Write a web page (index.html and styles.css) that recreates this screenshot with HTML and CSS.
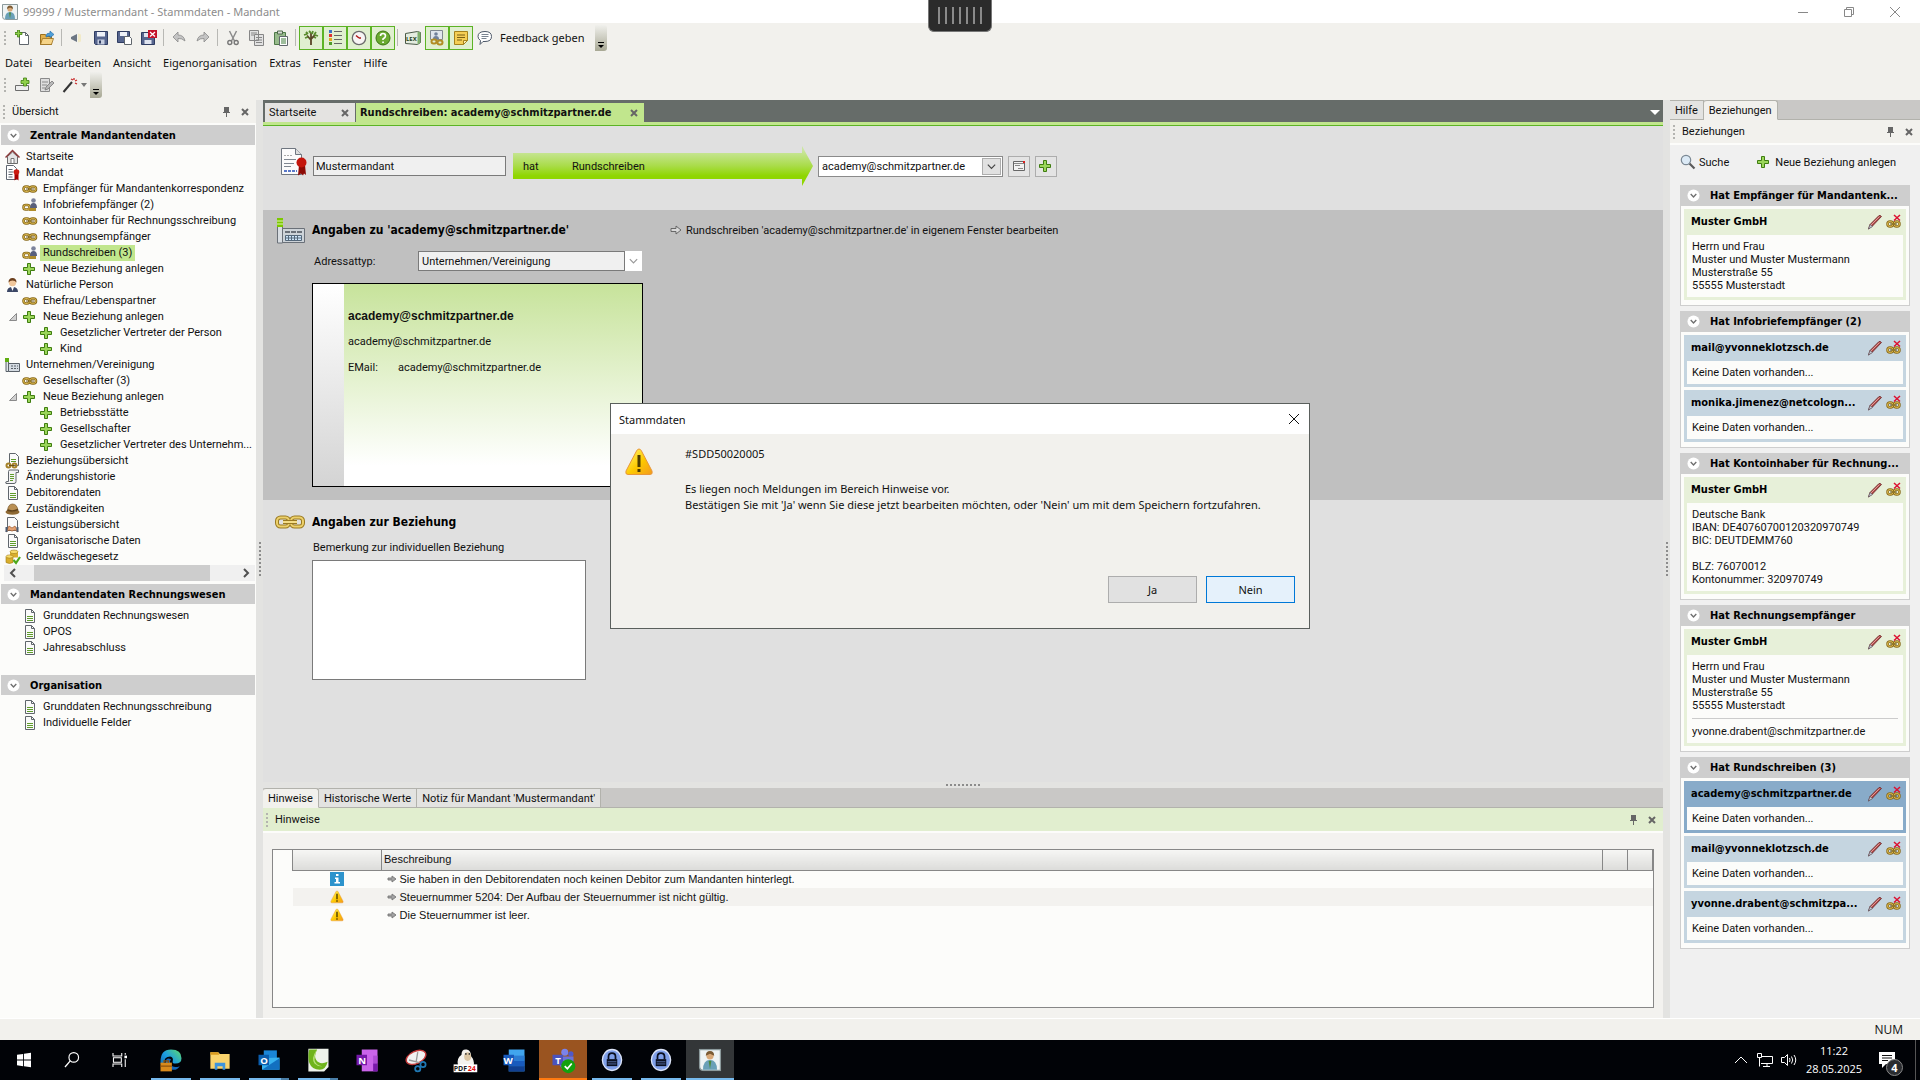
FILE: index.html
```html
<!DOCTYPE html>
<html lang="de">

<head>
  <meta charset="UTF-8">
  <meta name="viewport" content="width=device-width, initial-scale=1.0">
  <title>99999 / Mustermandant - Stammdaten - Mandant</title>
  <link rel="stylesheet" href="styles.css">
</head>

<body>

  <!-- Icon sprite -->
  <svg class="sprite" aria-hidden="true">
    <defs>
      <linearGradient id="g-arrow" x1="0" y1="0" x2="0" y2="1">
        <stop offset="0.1" stop-color="#cbe6a0"/>
        <stop offset="0.5" stop-color="#a9dc48"/>
        <stop offset="0.75" stop-color="#8fd600"/>
        <stop offset="1" stop-color="#8fd600"/>
      </linearGradient>
      <linearGradient id="g-warn" x1="0" y1="0" x2="1" y2="1">
        <stop offset="0.2" stop-color="#ffe94a"/>
        <stop offset="0.55" stop-color="#fdc800"/>
        <stop offset="1" stop-color="#f39a1e"/>
      </linearGradient>
      <linearGradient id="g-edge" x1="0" y1="1" x2="1" y2="0">
        <stop offset="0" stop-color="#0c59a4"/>
        <stop offset="0.5" stop-color="#1b9de2"/>
        <stop offset="1" stop-color="#5fdc6a"/>
      </linearGradient>
    </defs>
    <symbol id="plus" viewBox="0 0 16 16">
      <path d="M5.500 2.500h3v4h4v3h-4v4h-3v-4h-4v-3h4z" fill="#9bd65a" stroke="#3f7d10"/>
    </symbol>
    <symbol id="chain" viewBox="0 0 16 16">
      <rect x="1.500" y="5.500" width="6" height="5" rx="2.500" fill="none" stroke="#8a6b1c" stroke-width="2.600"/>
      <rect x="8" y="5.500" width="6" height="5" rx="2.500" fill="none" stroke="#8a6b1c" stroke-width="2.600"/>
      <rect x="1.500" y="5.500" width="6" height="5" rx="2.500" fill="none" stroke="#d9b64c"/>
      <rect x="8" y="5.500" width="6" height="5" rx="2.500" fill="none" stroke="#d9b64c"/>
      <path d="M4 8h8" stroke="#6d5414"/>
    </symbol>
    <symbol id="chain-big" viewBox="0 0 30 14">
      <rect x="2" y="2.500" width="12" height="9" rx="3.500" fill="none" stroke="#9a7a22" stroke-width="4"/>
      <rect x="16" y="2.500" width="12" height="9" rx="3.500" fill="none" stroke="#9a7a22" stroke-width="4"/>
      <rect x="2" y="2.500" width="12" height="9" rx="3.500" fill="none" stroke="#ecd06a" stroke-width="2"/>
      <rect x="16" y="2.500" width="12" height="9" rx="3.500" fill="none" stroke="#ecd06a" stroke-width="2"/>
      <path d="M8 7h14" stroke="#9a7a22" stroke-width="4"/>
      <path d="M8 7h14" stroke="#f3dc86" stroke-width="2"/>
    </symbol>
    <symbol id="chain-person" viewBox="0 0 16 16">
      <rect x="1.500" y="8" width="6" height="4.500" rx="2" fill="none" stroke="#8a6b1c" stroke-width="2.500"/>
      <rect x="1.500" y="8" width="6" height="4.500" rx="2" fill="none" stroke="#d9b64c"/>
      <path d="M7 12.500h7" stroke="#b08d2c" stroke-width="3"/>
      <circle cx="11.500" cy="3.500" r="2.300" fill="#7c839c"/>
      <path d="M8 11q0-5 3.500-5t3.500 5z" fill="#59607c"/>
    </symbol>
    <symbol id="chain-del" viewBox="0 0 16 16">
      <rect x="1.500" y="7.500" width="5.500" height="5" rx="2.500" fill="none" stroke="#8a6b1c" stroke-width="2.500"/>
      <rect x="8" y="7.500" width="5.500" height="5" rx="2.500" fill="none" stroke="#8a6b1c" stroke-width="2.500"/>
      <rect x="1.500" y="7.500" width="5.500" height="5" rx="2.500" fill="none" stroke="#dfbd50"/>
      <rect x="8" y="7.500" width="5.500" height="5" rx="2.500" fill="none" stroke="#dfbd50"/>
      <path d="M4 10h7" stroke="#6d5414"/>
      <path d="M8 1l6 5.500M14 1l-6 5.500" stroke="#dc1030" stroke-width="1.500"/>
    </symbol>
    <symbol id="pencil" viewBox="0 0 16 16">
      <path d="M1.500 15l1.500-4.500 9-9q1.500-.5 2.500 1l-9 9.500z" fill="#b04848" stroke="#6a2a2a" stroke-width=".8"/>
      <path d="M4 11l8.500-8.500" stroke="#e09a96"/>
      <path d="M1.500 15l1.500-4.500 2.500 2z" fill="#c9c9d4" stroke="#55555f" stroke-width=".6"/>
    </symbol>
    <symbol id="home" viewBox="0 0 16 16">
      <path d="M2.500 7.500v7h10v-7l-5-4.500z" fill="#e4e4e4" stroke="#6c6c6c"/>
      <path d="M.5 8.500l7-7 7 7" fill="none" stroke="#8c3a3a" stroke-width="1.500"/>
      <path d="M6 14V9.500h3V14" fill="#fff" stroke="#777"/>
    </symbol>
    <symbol id="cert" viewBox="0 0 16 16">
      <path d="M1.500.5h7l3 3v11h-10z" fill="#fff" stroke="#5f6670"/>
      <path d="M3.500 4.500h4M3.500 7h5M3.500 9.500h4M3.500 12h4" stroke="#5f6670"/>
      <path d="M9.500 9v6.500l2-1.500 2 1.500V9z" fill="#a00"/>
      <circle cx="11.500" cy="7" r="2.800" fill="#cc1a10"/>
    </symbol>
    <symbol id="cert-big" viewBox="0 0 30 30">
      <path d="M3.500 1.500h14l6 6v20h-20z" fill="#fbfbfb" stroke="#6f7680"/>
      <path d="M17.500 1.500v6h6" fill="#ddd" stroke="#6f7680"/>
      <path d="M6 8.500h8" stroke="#aaa" stroke-dasharray="2 1"/>
      <path d="M6 12.500h12M6 16.500h10M6 19.500h7" stroke="#7f8690"/>
      <path d="M6 24h13" stroke="#5a78c8" stroke-width="2" stroke-dasharray="3 1"/>
      <path d="M21 18l-1 10.500 3-2 2 2 1-2 2 1.500-1-10z" fill="#8d0a05"/>
      <circle cx="23.500" cy="15.500" r="5" fill="#c4150c"/>
    </symbol>
    <symbol id="person" viewBox="0 0 16 16">
      <path d="M2 15q0-5 5.500-5t5.500 5z" fill="#3b4766"/>
      <path d="M6 10l1.500 4L9 10z" fill="#fff"/>
      <circle cx="7.500" cy="5.500" r="3.700" fill="#f0c79c"/>
      <path d="M3.500 5.500Q3.500 1 7.500 1t4 4.500Q10 3.500 7.500 3.500t-4 2z" fill="#6b3f1d"/>
    </symbol>
    <symbol id="factory" viewBox="0 0 16 16">
      <path d="M1 3h2.500v11.500H1z" fill="#dfe4e8" stroke="#596068"/>
      <path d="M0 1h4v4H0z" fill="#5fae10"/>
      <path d="M3.500 6.500h11v8h-11z" fill="#d4dbe2" stroke="#596068"/>
      <path d="M6 9h7M6 11.500h7" stroke="#596068" stroke-dasharray="2 1"/>
    </symbol>
    <symbol id="factory-big" viewBox="0 0 30 28">
      <path d="M1.500 3h5v23h-5z" fill="#d8dde2" stroke="#6a7078"/>
      <path d="M1 1h6v9H1z" fill="#7cc800"/>
      <path d="M1 4h6M1 7h6" stroke="#dff0b8"/>
      <path d="M6.500 11.500h22v14h-22z" fill="#cdd3d8" stroke="#6a7078"/>
      <path d="M9 15h17" stroke="#6a7078" stroke-width="2" stroke-dasharray="5 1"/>
      <path d="M9.500 18.500h16v5h-16z" fill="#cfe6fa" stroke="#55687a"/>
      <path d="M12.500 18v6M15.500 18v6M18.500 18v6M21.500 18v6M9 21h17" stroke="#55687a"/>
    </symbol>
    <symbol id="doc" viewBox="0 0 16 16">
      <path d="M3.500 1.500h6l3 3v10h-9z" fill="#fafafa" stroke="#60666c"/>
      <path d="M9.500 1.500v3h3" fill="none" stroke="#60666c"/>
      <path d="M5 8.500h6M5 10.500h6M5 12.500h6" stroke="#5f9c2a"/>
    </symbol>
    <symbol id="doc-chain" viewBox="0 0 16 16">
      <path d="M4.500.5h6l3 3v9h-9z" fill="#fafafa" stroke="#60666c"/>
      <path d="M6 6.500h5M6 8.500h5" stroke="#5f9c2a"/>
      <rect x="1.500" y="10.500" width="4" height="4" rx="2" fill="none" stroke="#a5822a" stroke-width="2"/>
      <rect x="7.500" y="10.500" width="4" height="4" rx="2" fill="none" stroke="#a5822a" stroke-width="2"/>
      <path d="M4 12.500h5" stroke="#6d5414"/>
    </symbol>
    <symbol id="scroll" viewBox="0 0 16 16">
      <path d="M3.500 2.500Q3.500 1 5 1h8.500v2.500H11v9q0 2-2 2H1q-1-2 1-2h1.500z" fill="#f4f4f4" stroke="#60666c"/>
      <path d="M5 5.500h4M5 7.500h4M5 9.500h4M5 11.500h3" stroke="#5f9c2a"/>
    </symbol>
    <symbol id="hat" viewBox="0 0 16 16">
      <ellipse cx="7.500" cy="11" rx="7" ry="2.800" fill="#8f6a34"/>
      <path d="M2.500 10q.5-7 5-7T13 9.500q-5 2.500-10.500.5z" fill="#b98f52" stroke="#7a5828" stroke-width=".7"/>
      <path d="M2.500 9q5 2 10.500-.5" fill="none" stroke="#5f421a" stroke-width="1.500"/>
    </symbol>
    <symbol id="doc-hands" viewBox="0 0 16 16">
      <path d="M2.500.5h7l3 3v10h-10z" fill="#fafafa" stroke="#60666c"/>
      <path d="M1 15l3-6 3 2 3-2 3 6-3-2-3 1-3-1z" fill="#e5a373" stroke="#99582c" stroke-width=".7"/>
      <path d="M1.500 10v5M12.500 10v5" stroke="#4b5a70" stroke-width="2"/>
    </symbol>
    <symbol id="coins" viewBox="0 0 16 16">
      <path d="M5 2.500v6h8v-6z" fill="#d9ae2c"/>
      <ellipse cx="9" cy="2.800" rx="4" ry="1.800" fill="#f8dc6a" stroke="#a07a14" stroke-width=".6"/>
      <path d="M1 8v5.500q3.500 2 7 0V8z" fill="#d9ae2c" stroke="#a07a14" stroke-width=".6"/>
      <ellipse cx="4.500" cy="7.500" rx="3.500" ry="1.600" fill="#f8dc6a" stroke="#a07a14" stroke-width=".6"/>
      <path d="M8.500 11l2.500 3 4-6" fill="none" stroke="#4da81c" stroke-width="2.200"/>
    </symbol>
    <symbol id="chev-circle" viewBox="0 0 14 14">
      <circle cx="7" cy="7" r="6.500" fill="#fff"/>
      <path d="M4 5.500l3 3 3-3" fill="none" stroke="#6f6f6f" stroke-width="1.500"/>
    </symbol>
    <symbol id="pin" viewBox="0 0 10 12">
      <path d="M3 1h5v5H3z" fill="#666"/>
      <path d="M2 6.500h7M5.500 7v4" stroke="#666"/>
    </symbol>
    <symbol id="close" viewBox="0 0 10 10">
      <path d="M2 2l6 6M8 2L2 8" stroke="#666" stroke-width="2"/>
    </symbol>
    <symbol id="arrow-r" viewBox="0 0 12 12">
      <path d="M1 4.500h5V2l5 4-5 4V7.500H1z" fill="#d8d8d8" stroke="#5e5e5e" stroke-width=".9"/>
    </symbol>
    <symbol id="arrow-s" viewBox="0 0 12 12">
      <path d="M2 5h4V3l4 3-4 3V7H2z" fill="#a2a2a2" stroke="#777" stroke-width=".9"/>
    </symbol>
    <symbol id="warn" viewBox="0 0 30 30">
      <path d="M15 2q1.500 0 2.500 2l10.500 20q1 3.500-2 3.500H4Q1 27.500 2 24L12.500 4Q13.500 2 15 2z" fill="url(#g-warn)" stroke="#e8973a"/>
      <path d="M13.500 8h3v12h-3zM13.500 22h3v3h-3z" fill="#4d3c00"/>
    </symbol>
    <symbol id="info" viewBox="0 0 14 14">
      <path d="M0 0h14v14H0z" fill="#2d93cc"/>
      <path d="M6 2h2.500v2H6zM5 5.500h3.500V10H10v1.500H4.500V10H6V7H5z" fill="#fff"/>
    </symbol>
    <symbol id="search" viewBox="0 0 16 16">
      <path d="M9.500 9.500l5 5" stroke="#5a5a5a" stroke-width="2.200"/>
      <circle cx="6" cy="6" r="4.700" fill="#dceaf6" stroke="#7b8894" stroke-width="1.200"/>
    </symbol>
    <symbol id="user-tile" viewBox="0 0 16 16">
      <path d="M.5.500h15v15h-12q-3 0-3-3z" fill="#eef3f4" stroke="#8c9a9c"/>
      <path d="M3 15q0-7 5-7t5 7z" fill="#6aa0b8"/>
      <path d="M7 8.500l1 6 1-6z" fill="#4d8a3c"/>
      <circle cx="8" cy="5" r="2.600" fill="#d8a878"/>
      <path d="M5 5q0-3.500 3-3.500T11 5L8 3.500z" fill="#7a5a34"/>
    </symbol>
    <symbol id="new" viewBox="0 0 16 16">
      <path d="M4.500 2.500h6l3 3v9h-9z" fill="#fff" stroke="#60666c"/>
      <path d="M10.500 2.500v3h3" fill="none" stroke="#60666c"/>
      <path d="M2.500 0h2v2.500H7v2H4.500V7h-2V4.500H0v-2h2.500z" fill="#8fd04a" stroke="#3f7d10" stroke-width=".8"/>
    </symbol>
    <symbol id="open" viewBox="0 0 16 16">
      <path d="M1.500 4.500h5l1 2h5v8h-11z" fill="#e2b04c" stroke="#9a7020"/>
      <path d="M3.500 8.500h11l-2 6h-11z" fill="#f6d488" stroke="#9a7020" stroke-width=".8"/>
      <path d="M7 6q0-3 4-3V1l4 3.500-4 3.200V6q-2 0-4 1z" fill="#4f9fd8" stroke="#1f6aa8" stroke-width=".6"/>
    </symbol>
    <symbol id="horn" viewBox="0 0 16 16">
      <path d="M2 7l6-3v8L2 9z" fill="#6c7684"/>
      <path d="M9 3.500l3 1v7l-3 1z" fill="#f1eac8"/>
    </symbol>
    <symbol id="save" viewBox="0 0 16 16">
      <path d="M1.500 1.500h13v13h-12l-1-1z" fill="#56658e" stroke="#2f3c62"/>
      <path d="M4 2h8v4.500H4z" fill="#eef1f8"/>
      <path d="M4.500 9.500h7v5h-7z" fill="#c6cee0"/>
      <path d="M6 10.500h2v3H6z" fill="#2f3c62"/>
    </symbol>
    <symbol id="save-doc" viewBox="0 0 16 16">
      <path d="M.5 1.500h12v11H.5z" fill="#56658e" stroke="#2f3c62"/>
      <path d="M3 2h7v4H3z" fill="#eef1f8"/>
      <path d="M7.500 6.500h5l2 2v6h-7z" fill="#fff" stroke="#60666c"/>
    </symbol>
    <symbol id="save-x" viewBox="0 0 16 16">
      <path d="M.5 2.500h13v12H.5z" fill="#56658e" stroke="#2f3c62"/>
      <path d="M3 3h7v4H3zM3.500 10h7v4h-7z" fill="#dfe4f0"/>
      <path d="M7 0h9v8H7z" fill="#c4122a"/>
      <path d="M9 2l5 4.500M14 2L9 6.500" stroke="#fff" stroke-width="1.300"/>
    </symbol>
    <symbol id="undo" viewBox="0 0 16 16">
      <path d="M2 7l5-5v3q6 0 7 6-3-3-7-2.500V12z" fill="#c4c4c4" stroke="#8a8a8a" stroke-width=".8"/>
    </symbol>
    <symbol id="redo" viewBox="0 0 16 16">
      <path d="M14 7L9 2v3q-6 0-7 6 3-3 7-2.500V12z" fill="#c4c4c4" stroke="#8a8a8a" stroke-width=".8"/>
    </symbol>
    <symbol id="cut" viewBox="0 0 16 16">
      <path d="M4.500 1l5 10M11.500 1l-5 10" stroke="#8c8c8c" stroke-width="1.500"/>
      <circle cx="4.800" cy="12.500" r="2" fill="none" stroke="#777" stroke-width="1.400"/>
      <circle cx="11.200" cy="12.500" r="2" fill="none" stroke="#777" stroke-width="1.400"/>
    </symbol>
    <symbol id="copy" viewBox="0 0 16 16">
      <path d="M.5.500h9v10h-9zM5.500 4.500h9v11h-9z" fill="#e2e2e2" stroke="#868686"/>
      <path d="M2 3h6M2 5h3M7 7.500h6M7 10h6M7 12.500h6" stroke="#868686"/>
    </symbol>
    <symbol id="paste" viewBox="0 0 16 16">
      <path d="M1.500 2.500h11v12h-11z" fill="#98bb8c" stroke="#4e7a48"/>
      <path d="M4.500 1h5v3h-5z" fill="#d8ddd6" stroke="#4e6a4a"/>
      <path d="M6.500 6.500h8v9h-8z" fill="#fff" stroke="#60666c"/>
      <path d="M8 9h5M8 11h5M8 13h5" stroke="#3f7d3a"/>
    </symbol>
    <symbol id="tree" viewBox="0 0 16 16">
      <path d="M8 15V8M8 10L4 5.500M8 9l4-4M8 8V3" stroke="#5a4628" stroke-width="1.800" fill="none"/>
      <path d="M1 5l3-1M3 2l2 2M6 1l2 2M10 1l-1 3M13 2l-2 3M15 6l-3-1M2 8l3-1M13 8l-2-1" stroke="#5a8c2e" stroke-width="1.800"/>
    </symbol>
    <symbol id="list" viewBox="0 0 16 16">
      <path d="M2 0h3v3H2z" fill="#3f74c4"/>
      <path d="M2 4h3v3H2z" fill="#d33"/>
      <path d="M2 8h3v3H2z" fill="#e3a820"/>
      <path d="M2 12h3v3H2z" fill="#4f9c2c"/>
      <path d="M7 1.500h8M7 5.500h8M7 9.500h8M7 13.500h8" stroke="#666"/>
    </symbol>
    <symbol id="clock" viewBox="0 0 16 16">
      <circle cx="8" cy="8" r="6.700" fill="#f7f4f4" stroke="#6b6b6b" stroke-width="1.300"/>
      <path d="M8 8L5 5.500M8 8h2" stroke="#b01818" stroke-width="1.500"/>
    </symbol>
    <symbol id="help" viewBox="0 0 16 16">
      <circle cx="8" cy="8" r="7" fill="#6aab30" stroke="#3c7414"/>
      <path d="M5.500 6q0-2.500 2.500-2.500T10.500 6Q10.500 7.500 8 9v1" fill="none" stroke="#fff" stroke-width="1.600"/>
      <path d="M7.200 11.500h1.700v1.500H7.200z" fill="#fff"/>
    </symbol>
    <symbol id="rel" viewBox="0 0 16 16">
      <path d="M1.500.500h12v9h-12z" fill="#e0e6ec" stroke="#7f8890"/>
      <circle cx="7" cy="4" r="1.800" fill="#70809a"/>
      <path d="M4 9q0-3 3-3t3 3z" fill="#70809a"/>
      <rect x="2.500" y="9.500" width="5" height="4" rx="2" fill="none" stroke="#b18c24" stroke-width="2"/>
      <rect x="8.500" y="10.500" width="5" height="4" rx="2" fill="none" stroke="#b18c24" stroke-width="2"/>
    </symbol>
    <symbol id="note" viewBox="0 0 16 16">
      <path d="M1.500 1.500h13v9l-4 4h-9z" fill="#f5cf56" stroke="#a5821c"/>
      <path d="M10.500 14.500v-4h4z" fill="#fdeeb4" stroke="#a5821c"/>
      <path d="M4 5h8M4 7.500h8M4 10h5" stroke="#7a6014"/>
    </symbol>
    <symbol id="bubble" viewBox="0 0 16 16">
      <path d="M8 1.500q6.500 0 6.500 5T8 11.500H6l-3 3 .5-4q-2.500-1.500-2.500-4 0-5 7-5z" fill="#fff" stroke="#4d5868"/>
      <path d="M4.500 4.500h7M4.500 6.500h7M4.500 8.500h5" stroke="#7a8490"/>
    </symbol>
    <symbol id="card-plus" viewBox="0 0 16 16">
      <path d="M.5 8.500h13v5H.5z" fill="#eee" stroke="#6c6c6c"/>
      <path d="M8.500 1h3v2.500H14v3h-2.500V9h-3V6.500H6v-3h2.500z" fill="#8fd04a" stroke="#3f7d10" stroke-width=".8"/>
    </symbol>
    <symbol id="edit" viewBox="0 0 16 16">
      <path d="M1.500 1.500h9v13h-9z" fill="#dedede" stroke="#8a8a8a"/>
      <path d="M3 5h6M3 8h5M3 11h3" stroke="#8a8a8a"/>
      <path d="M6 13l1-3 6-6 2 2-6 6z" fill="#b8b8b8" stroke="#777" stroke-width=".8"/>
    </symbol>
    <symbol id="wand" viewBox="0 0 16 16">
      <path d="M1.500 15L10 5" stroke="#333" stroke-width="2"/>
      <path d="M9 2l2 1M12 1v2M15 3l-2 1M13 6l2 1" stroke="#c82828" stroke-width="1.300"/>
    </symbol>
    <symbol id="form" viewBox="0 0 16 16">
      <path d="M2.500 3.500h11v9h-11z" fill="#f2f2f2" stroke="#666"/>
      <path d="M3 5.500h10" stroke="#888"/>
      <path d="M4 7.500h5M7 10.500h5" stroke="#888"/>
      <path d="M12 3h2v2h-2z" fill="#d22"/>
    </symbol>
    <symbol id="chev" viewBox="0 0 12 12">
      <path d="M2 4l4 4 4-4" fill="none" stroke="currentColor" stroke-width="1.300"/>
    </symbol>
  </svg>

  <header class="window-head">
    <div class="title-bar">
      <svg class="ic"><use href="#user-tile"/></svg>
      <span class="window-title">99999 / Mustermandant - Stammdaten - Mandant</span>
      <div class="window-buttons">
        <button aria-label="Minimieren"><svg viewBox="0 0 12 12"><path d="M1 6.500h10"/></svg></button>
        <button aria-label="Verkleinern"><svg viewBox="0 0 12 12"><path d="M1.500 3.500h7v7h-7zM3.500 3V1.500h7v7H9"/></svg></button>
        <button aria-label="Schließen"><svg viewBox="0 0 12 12"><path d="M1 1l10 10M11 1L1 11"/></svg></button>
      </div>
    </div>

    <div class="toolbar">
      <span class="grip"></span>
      <button class="tool" aria-label="Neu"><svg class="ic"><use href="#new"/></svg></button>
      <button class="tool" aria-label="Öffnen"><svg class="ic"><use href="#open"/></svg></button>
      <span class="sep"></span>
      <button class="tool" aria-label="Meldung"><svg class="ic"><use href="#horn"/></svg></button>
      <button class="tool" aria-label="Speichern"><svg class="ic"><use href="#save"/></svg></button>
      <button class="tool" aria-label="Speichern und neu"><svg class="ic"><use href="#save-doc"/></svg></button>
      <button class="tool" aria-label="Speichern und schließen"><svg class="ic"><use href="#save-x"/></svg></button>
      <span class="sep"></span>
      <button class="tool" aria-label="Rückgängig"><svg class="ic"><use href="#undo"/></svg></button>
      <button class="tool" aria-label="Wiederholen"><svg class="ic"><use href="#redo"/></svg></button>
      <span class="sep"></span>
      <button class="tool" aria-label="Ausschneiden"><svg class="ic"><use href="#cut"/></svg></button>
      <button class="tool" aria-label="Kopieren"><svg class="ic"><use href="#copy"/></svg></button>
      <button class="tool" aria-label="Einfügen"><svg class="ic"><use href="#paste"/></svg></button>
      <span class="sep"></span>
      <button class="tool on" aria-label="Übersicht"><svg class="ic"><use href="#tree"/></svg></button>
      <button class="tool on" aria-label="Eigenschaften"><svg class="ic"><use href="#list"/></svg></button>
      <button class="tool on" aria-label="Historie"><svg class="ic"><use href="#clock"/></svg></button>
      <button class="tool on" aria-label="Hilfe"><svg class="ic"><use href="#help"/></svg></button>
      <span class="sep"></span>
      <button class="tool" aria-label="Lexinform"><svg class="ic" viewBox="0 0 16 16"><path d="M.5 3.500l12-2 3 1v10l-3 2-12-1z" fill="#e4ece0" stroke="#4a5a48"/><path d="M12.500 1.500l3 1v10l-3 2z" fill="#7fae6c"/><text x="1" y="11" font-size="6" font-weight="bold" fill="#24421c">LEX</text></svg></button>
      <button class="tool on" aria-label="Beziehungen"><svg class="ic"><use href="#rel"/></svg></button>
      <button class="tool on" aria-label="Notiz"><svg class="ic"><use href="#note"/></svg></button>
      <button class="tool feedback"><svg class="ic"><use href="#bubble"/></svg>Feedback geben</button>
      <button class="overflow" aria-label="Weitere Symbole"></button>
    </div>

    <nav class="menu">
      <a href="#">Datei</a>
      <a href="#">Bearbeiten</a>
      <a href="#">Ansicht</a>
      <a href="#">Eigenorganisation</a>
      <a href="#">Extras</a>
      <a href="#">Fenster</a>
      <a href="#">Hilfe</a>
    </nav>

    <div class="toolbar second">
      <span class="grip"></span>
      <button class="tool" aria-label="Anlegen"><svg class="ic"><use href="#card-plus"/></svg></button>
      <button class="tool" aria-label="Ändern"><svg class="ic"><use href="#edit"/></svg></button>
      <button class="tool wand" aria-label="Assistent"><svg class="ic"><use href="#wand"/></svg><span class="tri"></span></button>
      <button class="overflow" aria-label="Weitere Symbole"></button>
    </div>

    <div class="remote-handle"><i></i><i></i><i></i><i></i><i></i><i></i><i></i></div>
  </header>

  <main class="workspace">

    <aside class="overview">
      <div class="pane-head">
        <span class="grip"></span>
        <h2>Übersicht</h2>
        <button aria-label="Anheften"><svg class="pin"><use href="#pin"/></svg></button>
        <button aria-label="Schließen"><svg class="x"><use href="#close"/></svg></button>
      </div>
      <div class="overview-body">
        <h3 class="bar"><svg class="chev"><use href="#chev-circle"/></svg>Zentrale Mandantendaten</h3>
        <ul class="tree">
          <li><svg class="ic"><use href="#home"/></svg><a href="#">Startseite</a></li>
          <li><svg class="ic"><use href="#cert"/></svg><a href="#">Mandat</a></li>
          <li class="l1"><svg class="ic"><use href="#chain"/></svg><a href="#">Empfänger für Mandantenkorrespondenz</a></li>
          <li class="l1"><svg class="ic"><use href="#chain-person"/></svg><a href="#">Infobriefempfänger (2)</a></li>
          <li class="l1"><svg class="ic"><use href="#chain"/></svg><a href="#">Kontoinhaber für Rechnungsschreibung</a></li>
          <li class="l1"><svg class="ic"><use href="#chain"/></svg><a href="#">Rechnungsempfänger</a></li>
          <li class="l1"><svg class="ic"><use href="#chain-person"/></svg><a href="#" class="selected">Rundschreiben (3)</a></li>
          <li class="l1"><svg class="ic"><use href="#plus"/></svg><a href="#">Neue Beziehung anlegen</a></li>
          <li><svg class="ic"><use href="#person"/></svg><a href="#">Natürliche Person</a></li>
          <li class="l1"><svg class="ic"><use href="#chain"/></svg><a href="#">Ehefrau/Lebenspartner</a></li>
          <li class="l1 open"><svg class="twist" viewBox="0 0 8 8"><path d="M7.500.500v7h-7z"/></svg><svg class="ic"><use href="#plus"/></svg><a href="#">Neue Beziehung anlegen</a></li>
          <li class="l2"><svg class="ic"><use href="#plus"/></svg><a href="#">Gesetzlicher Vertreter der Person</a></li>
          <li class="l2"><svg class="ic"><use href="#plus"/></svg><a href="#">Kind</a></li>
          <li><svg class="ic"><use href="#factory"/></svg><a href="#">Unternehmen/Vereinigung</a></li>
          <li class="l1"><svg class="ic"><use href="#chain"/></svg><a href="#">Gesellschafter (3)</a></li>
          <li class="l1 open"><svg class="twist" viewBox="0 0 8 8"><path d="M7.500.500v7h-7z"/></svg><svg class="ic"><use href="#plus"/></svg><a href="#">Neue Beziehung anlegen</a></li>
          <li class="l2"><svg class="ic"><use href="#plus"/></svg><a href="#">Betriebsstätte</a></li>
          <li class="l2"><svg class="ic"><use href="#plus"/></svg><a href="#">Gesellschafter</a></li>
          <li class="l2"><svg class="ic"><use href="#plus"/></svg><a href="#">Gesetzlicher Vertreter des Unternehm...</a></li>
          <li><svg class="ic"><use href="#doc-chain"/></svg><a href="#">Beziehungsübersicht</a></li>
          <li><svg class="ic"><use href="#scroll"/></svg><a href="#">Änderungshistorie</a></li>
          <li><svg class="ic"><use href="#doc"/></svg><a href="#">Debitorendaten</a></li>
          <li><svg class="ic"><use href="#hat"/></svg><a href="#">Zuständigkeiten</a></li>
          <li><svg class="ic"><use href="#doc-hands"/></svg><a href="#">Leistungsübersicht</a></li>
          <li><svg class="ic"><use href="#doc"/></svg><a href="#">Organisatorische Daten</a></li>
          <li><svg class="ic"><use href="#coins"/></svg><a href="#">Geldwäschegesetz</a></li>
        </ul>
        <div class="hscroll">
          <svg viewBox="0 0 12 12"><path d="M8 2L4 6l4 4"/></svg>
          <span class="thumb"></span>
          <svg viewBox="0 0 12 12"><path d="M4 2l4 4-4 4"/></svg>
        </div>
        <h3 class="bar"><svg class="chev"><use href="#chev-circle"/></svg>Mandantendaten Rechnungswesen</h3>
        <ul class="tree short">
          <li class="l1"><svg class="ic"><use href="#doc"/></svg><a href="#">Grunddaten Rechnungswesen</a></li>
          <li class="l1"><svg class="ic"><use href="#doc"/></svg><a href="#">OPOS</a></li>
          <li class="l1"><svg class="ic"><use href="#doc"/></svg><a href="#">Jahresabschluss</a></li>
        </ul>
        <h3 class="bar"><svg class="chev"><use href="#chev-circle"/></svg>Organisation</h3>
        <ul class="tree">
          <li class="l1"><svg class="ic"><use href="#doc"/></svg><a href="#">Grunddaten Rechnungsschreibung</a></li>
          <li class="l1"><svg class="ic"><use href="#doc"/></svg><a href="#">Individuelle Felder</a></li>
        </ul>
      </div>
    </aside>

    <div class="splitter"><span class="dots"></span></div>

    <div class="center">
      <section class="document">
        <div class="doc-tabs">
          <div class="doc-tab"><a href="#">Startseite</a><button aria-label="Tab schließen"><svg class="x"><use href="#close"/></svg></button></div>
          <div class="doc-tab active"><a href="#">Rundschreiben: academy@schmitzpartner.de</a><button aria-label="Tab schließen"><svg class="x"><use href="#close"/></svg></button></div>
          <span class="tab-menu"></span>
        </div>

        <div class="relation">
          <svg class="big-icon"><use href="#cert-big"/></svg>
          <input class="field name" type="text" value="Mustermandant" aria-label="Name" readonly>
          <div class="rel-arrow">
            <svg viewBox="0 0 300 40" preserveAspectRatio="none"><path d="M0 7h289V0l11 20-11 20v-7H0z" fill="url(#g-arrow)"/></svg>
            <span class="verb">hat</span><span>Rundschreiben</span>
          </div>
          <div class="combo">
            <select aria-label="Empfänger"><option>academy@schmitzpartner.de</option></select>
            <svg class="combo-btn"><use href="#chev"/></svg>
          </div>
          <button class="square" aria-label="Details"><svg class="ic"><use href="#form"/></svg></button>
          <button class="square" aria-label="Hinzufügen"><svg class="ic"><use href="#plus"/></svg></button>
        </div>

        <div class="address">
          <svg class="big-icon"><use href="#factory-big"/></svg>
          <div class="address-body">
            <div class="address-head">
              <h2>Angaben zu 'academy@schmitzpartner.de'</h2>
              <a href="#"><svg class="arrow"><use href="#arrow-r"/></svg>Rundschreiben 'academy@schmitzpartner.de' in eigenem Fenster bearbeiten</a>
            </div>
            <div class="type-row">
              <label for="typ">Adressattyp:</label>
              <div class="type-select">
                <select id="typ"><option>Unternehmen/Vereinigung</option></select>
                <svg class="type-btn"><use href="#chev"/></svg>
              </div>
            </div>
            <div class="address-card">
              <strong>academy@schmitzpartner.de</strong>
              <p>academy@schmitzpartner.de</p>
              <p><span class="key">EMail:</span>academy@schmitzpartner.de</p>
            </div>
          </div>
        </div>

        <div class="remark">
          <svg class="chain-icon"><use href="#chain-big"/></svg>
          <div class="remark-body">
            <h2>Angaben zur Beziehung</h2>
            <label for="bem">Bemerkung zur individuellen Beziehung</label>
            <textarea id="bem"></textarea>
          </div>
        </div>
      </section>

      <div class="hsplitter"><span class="hdots"></span></div>

      <section class="hints">
        <div class="tabs">
          <button class="tab active">Hinweise</button>
          <button class="tab">Historische Werte</button>
          <button class="tab">Notiz für Mandant 'Mustermandant'</button>
        </div>
        <div class="pane-head green">
          <span class="grip"></span>
          <h2>Hinweise</h2>
          <button aria-label="Anheften"><svg class="pin"><use href="#pin"/></svg></button>
          <button aria-label="Schließen"><svg class="x"><use href="#close"/></svg></button>
        </div>
        <div class="hint-box">
          <table>
            <thead>
              <tr><th class="c-icon"></th><th>Beschreibung</th><th class="c-a"></th><th class="c-b"></th></tr>
            </thead>
            <tbody>
              <tr><td><svg class="info"><use href="#info"/></svg></td><td colspan="3"><svg class="arrow"><use href="#arrow-s"/></svg>Sie haben in den Debitorendaten noch keinen Debitor zum Mandanten hinterlegt.</td></tr>
              <tr><td><svg class="info"><use href="#warn"/></svg></td><td colspan="3"><svg class="arrow"><use href="#arrow-s"/></svg>Steuernummer 5204: Der Aufbau der Steuernummer ist nicht gültig.</td></tr>
              <tr><td><svg class="info"><use href="#warn"/></svg></td><td colspan="3"><svg class="arrow"><use href="#arrow-s"/></svg>Die Steuernummer ist leer.</td></tr>
            </tbody>
          </table>
        </div>
      </section>
    </div>

    <div class="splitter"><span class="dots"></span></div>

    <aside class="relations">
      <div class="tabs">
        <button class="tab">Hilfe</button>
        <button class="tab active">Beziehungen</button>
      </div>
      <div class="pane-head">
        <span class="grip"></span>
        <h2>Beziehungen</h2>
        <button aria-label="Anheften"><svg class="pin"><use href="#pin"/></svg></button>
        <button aria-label="Schließen"><svg class="x"><use href="#close"/></svg></button>
      </div>
      <div class="relations-body">
        <div class="actions">
          <a href="#"><svg class="ic"><use href="#search"/></svg>Suche</a>
          <a href="#"><svg class="ic"><use href="#plus"/></svg>Neue Beziehung anlegen</a>
        </div>

        <section class="group">
          <h3 class="bar"><svg class="chev"><use href="#chev-circle"/></svg>Hat Empfänger für Mandantenk...</h3>
          <article class="card green">
            <h4><span>Muster GmbH</span><svg class="ic"><use href="#pencil"/></svg><svg class="ic"><use href="#chain-del"/></svg></h4>
            <p>Herrn und Frau<br>Muster und Muster Mustermann<br>Musterstraße 55<br>55555 Musterstadt</p>
          </article>
        </section>

        <section class="group">
          <h3 class="bar"><svg class="chev"><use href="#chev-circle"/></svg>Hat Infobriefempfänger (2)</h3>
          <article class="card">
            <h4><span>mail@yvonneklotzsch.de</span><svg class="ic"><use href="#pencil"/></svg><svg class="ic"><use href="#chain-del"/></svg></h4>
            <p>Keine Daten vorhanden...</p>
          </article>
          <article class="card">
            <h4><span>monika.jimenez@netcologn...</span><svg class="ic"><use href="#pencil"/></svg><svg class="ic"><use href="#chain-del"/></svg></h4>
            <p>Keine Daten vorhanden...</p>
          </article>
        </section>

        <section class="group">
          <h3 class="bar"><svg class="chev"><use href="#chev-circle"/></svg>Hat Kontoinhaber für Rechnung...</h3>
          <article class="card green">
            <h4><span>Muster GmbH</span><svg class="ic"><use href="#pencil"/></svg><svg class="ic"><use href="#chain-del"/></svg></h4>
            <p>Deutsche Bank<br>IBAN: DE40760700120320970749<br>BIC: DEUTDEMM760<br><br>BLZ: 76070012<br>Kontonummer: 320970749</p>
          </article>
        </section>

        <section class="group">
          <h3 class="bar"><svg class="chev"><use href="#chev-circle"/></svg>Hat Rechnungsempfänger</h3>
          <article class="card green">
            <h4><span>Muster GmbH</span><svg class="ic"><use href="#pencil"/></svg><svg class="ic"><use href="#chain-del"/></svg></h4>
            <p>Herrn und Frau<br>Muster und Muster Mustermann<br>Musterstraße 55<br>55555 Musterstadt<span class="mail">yvonne.drabent@schmitzpartner.de</span></p>
          </article>
        </section>

        <section class="group">
          <h3 class="bar"><svg class="chev"><use href="#chev-circle"/></svg>Hat Rundschreiben (3)</h3>
          <article class="card current">
            <h4><span>academy@schmitzpartner.de</span><svg class="ic"><use href="#pencil"/></svg><svg class="ic"><use href="#chain-del"/></svg></h4>
            <p>Keine Daten vorhanden...</p>
          </article>
          <article class="card">
            <h4><span>mail@yvonneklotzsch.de</span><svg class="ic"><use href="#pencil"/></svg><svg class="ic"><use href="#chain-del"/></svg></h4>
            <p>Keine Daten vorhanden...</p>
          </article>
          <article class="card">
            <h4><span>yvonne.drabent@schmitzpa...</span><svg class="ic"><use href="#pencil"/></svg><svg class="ic"><use href="#chain-del"/></svg></h4>
            <p>Keine Daten vorhanden...</p>
          </article>
        </section>
      </div>
    </aside>
  </main>

  <div class="status-bar">NUM</div>

  <footer class="taskbar">
    <button class="task" aria-label="Start"><svg viewBox="0 0 32 32"><path d="M8 10l7-1v6.500H8zM16 8.800l8-1.200v7.900h-8zM8 16.500h7V23l-7-1zM16 16.500h8v7.900l-8-1.200z" fill="#fff"/></svg></button>
    <button class="task" aria-label="Suchen"><svg viewBox="0 0 32 32"><circle cx="18" cy="13" r="5.500" fill="none" stroke="#fff" stroke-width="1.300"/><path d="M14 17l-6 7" stroke="#fff" stroke-width="1.500"/></svg></button>
    <button class="task" aria-label="Aktive Anwendungen"><svg viewBox="0 0 32 32"><path d="M8 8v3.500h10V8M8 24v-3.500h10V24M8.500 13.500h9v5h-9zM22 8v2M22 15v9" fill="none" stroke="#fff" stroke-width="1.200"/><path d="M21 11h3v3h-3z" fill="#fff"/></svg></button>
    <button class="task app running" aria-label="Edge"><svg viewBox="0 0 32 32"><path d="M4 18Q4 4 16 4q12 0 12 10 0 6-7 6-4 0-3-3 1-4-3-5Q8 12 8 20q1 7 9 8Q4 28 4 18z" fill="url(#g-edge)"/><path d="M10 17q-1 8 7 10 6 1 9-4-8 3-11-3-1-3 1-5-5-2-6 2z" fill="#1668b8"/><path d="M4 19h13v10H4z" fill="#d98a1c"/><path d="M8 19v-2h5v2M4 23h13" fill="none" stroke="#8d520c" stroke-width="1.500"/></svg></button>
    <button class="task app running" aria-label="Explorer"><svg viewBox="0 0 32 32"><path d="M5 7h9l2 2h11v17H5z" fill="#f9d36c"/><path d="M5 7h9l1 3H5z" fill="#d89a1e"/><path d="M10 27v-8h12v8h-3v-4h-6v4z" fill="#3d94dc"/></svg></button>
    <button class="task app running group-task" aria-label="Outlook"><svg viewBox="0 0 32 32"><path d="M10 5h15v14H10z" fill="#1a86d8"/><path d="M8 14l20-1v14H8z" fill="#37b2f0"/><path d="M8 27l20-13v13z" fill="#1270c0"/><path d="M4 10h12v12H4z" fill="#0a5dad"/><text x="6" y="20" font-size="11" font-weight="bold" fill="#fff">O</text></svg></button>
    <button class="task app running group-task" aria-label="DATEV"><svg viewBox="0 0 32 32"><path d="M5 3h23v21l-5 5H5z" fill="#eef2ea"/><path d="M6 4h9q-4 8-1 12 4 6 13 2-2 9-9 9-9 0-12-8-2-7 0-15z" fill="#6fb41c"/><path d="M14 5q-6 9-2 15 4 4 9 3-8-1-9-7 0-5 2-11z" fill="#b9e27c"/></svg></button>
    <button class="task app" aria-label="OneNote"><svg viewBox="0 0 32 32"><path d="M10 4h18v25H10z" fill="#ca64ea"/><path d="M23 11h5v9h-5z" fill="#ae4bd5"/><path d="M23 20h5v9h-5z" fill="#7719aa"/><path d="M4 10h12v12H4z" fill="#7719aa"/><text x="6" y="20" font-size="11" font-weight="bold" fill="#fff">N</text></svg></button>
    <button class="task app" aria-label="Snipping Tool"><svg viewBox="0 0 32 32"><ellipse cx="16" cy="13" rx="12" ry="7" transform="rotate(-25 16 13)" fill="#f1f1f1" stroke="#c43a3a" stroke-width="1.500"/><path d="M8 16l12 3M18 7l-2 12" stroke="#999" stroke-width="1.500"/><circle cx="18" cy="26" r="3" fill="none" stroke="#1f78b4" stroke-width="2"/><circle cx="24" cy="21" r="3" fill="none" stroke="#1f78b4" stroke-width="2"/></svg></button>
    <button class="task app" aria-label="PDF24"><svg viewBox="0 0 32 32"><path d="M8 22q-2-8 4-12 0-7 6-6 5 1 5 8 4 4 3 10z" fill="#f4f2ee"/><ellipse cx="19" cy="12" rx="4" ry="5" fill="#dcc6a4"/><circle cx="17" cy="9" r="1" fill="#333"/><circle cx="21" cy="9" r="1" fill="#333"/><path d="M3 21h27v9H3z" fill="#fff"/><text x="3" y="29" font-size="8" font-weight="bold" fill="#222">PDF</text><text x="19" y="29" font-size="8" font-weight="bold" fill="#e01010">24</text></svg></button>
    <button class="task app" aria-label="Word"><svg viewBox="0 0 32 32"><path d="M10 4h18v25H10z" fill="#41a5ee"/><path d="M10 11h18v6H10z" fill="#2b7cd3"/><path d="M10 17h18v6H10z" fill="#185abd"/><path d="M10 23h18v6H10z" fill="#103f91"/><path d="M4 10h12v12H4z" fill="#185abd"/><text x="4" y="20" font-size="11" font-weight="bold" fill="#fff">W</text></svg></button>
    <button class="task app alert" aria-label="Teams"><svg viewBox="0 0 32 32"><circle cx="18" cy="7" r="4" fill="#7b83eb"/><circle cx="25" cy="9" r="3" fill="#5059c9"/><path d="M12 12h16v9q-2 6-8 6t-8-6z" fill="#6a72dc"/><path d="M4 10h12v12H4z" fill="#4b53bc"/><text x="7" y="20" font-size="11" font-weight="bold" fill="#fff">T</text><circle cx="22" cy="23" r="8" fill="#13a10e"/><path d="M18 23l3 3 5-6" fill="none" stroke="#fff" stroke-width="2"/></svg></button>
    <button class="task app running" aria-label="Sicherheitspaket"><svg viewBox="0 0 32 32"><ellipse cx="16" cy="16" rx="11" ry="12" fill="#7f9fe8" stroke="#dce4f8" stroke-width="1.500"/><path d="M10 15h12v8H10z" fill="#0a0f20"/><path d="M12 15v-3q0-4 4-4t4 4v3" fill="none" stroke="#0a0f20" stroke-width="2"/><path d="M11 18h10M11 20.500h10" stroke="#7f9fe8" stroke-width=".7"/></svg></button>
    <button class="task app running" aria-label="Sicherheitspaket"><svg viewBox="0 0 32 32"><ellipse cx="16" cy="16" rx="11" ry="12" fill="#7f9fe8" stroke="#dce4f8" stroke-width="1.500"/><path d="M10 15h12v8H10z" fill="#0a0f20"/><path d="M12 15v-3q0-4 4-4t4 4v3" fill="none" stroke="#0a0f20" stroke-width="2"/><path d="M11 18h10M11 20.500h10" stroke="#7f9fe8" stroke-width=".7"/></svg></button>
    <button class="task app focused" aria-label="Stammdaten"><svg viewBox="-2 -2 20 20"><use href="#user-tile" width="16" height="16"/></svg></button>

    <div class="tray">
      <svg class="tray-icon" viewBox="0 0 16 16"><path d="M2 11l6-6 6 6"/></svg>
      <svg class="tray-icon" viewBox="0 0 16 16"><path d="M4 4.500h11.500v7H4M10 12v2.500M6 14.500h7M.500 1.500h4v4h-4zM2.500 6v8.500"/></svg>
      <svg class="tray-icon" viewBox="0 0 16 16"><path d="M.5 5.500h3l3-3v11l-3-3h-3zM8.500 6q1 2 0 4M10.500 4.500q2.500 3.500 0 7M13 3q3.500 5 0 10"/></svg>
      <div class="clock">11:22<br>28.05.2025</div>
      <button class="notify" aria-label="Benachrichtigungen">
        <svg viewBox="0 0 18 18"><path d="M1 1h16v12h-9l-4 4v-4H1z" fill="#fff"/><path d="M4 4.500h10M4 7h10M4 9.500h6" stroke="#111"/></svg>
        <span class="badge">4</span>
      </button>
    </div>
  </footer>

  <!-- Message box over the form -->
  <div class="overlay">
    <div class="dialog" role="dialog" aria-labelledby="dlg-title">
      <div class="dialog-title">
        <h2 id="dlg-title">Stammdaten</h2>
        <button aria-label="Schließen"><svg viewBox="0 0 12 12"><path d="M1 1l10 10M11 1L1 11"/></svg></button>
      </div>
      <div class="dialog-body">
        <svg class="dialog-icon"><use href="#warn"/></svg>
        <div class="dialog-text">
          <p class="code">#SDD50020005</p>
          <p>Es liegen noch Meldungen im Bereich Hinweise vor.<br>Bestätigen Sie mit 'Ja' wenn Sie diese jetzt bearbeiten möchten, oder 'Nein' um mit dem Speichern fortzufahren.</p>
        </div>
      </div>
      <div class="dialog-buttons">
        <button>Ja</button>
        <button class="default">Nein</button>
      </div>
    </div>
  </div>

</body>

</html>
```

FILE: styles.css
```css
* {
  box-sizing: border-box;
}

body {
  margin: 0;
  min-height: 100vh;
  display: flex;
  flex-direction: column;
  background-color: #f2f1ed;
  font-family: Roboto, "Liberation Sans", Arial, sans-serif;
  font-size: 11px;
  line-height: 13px;
  color: #111;
}

h2, h3, h4, p, ul {
  margin: 0;
  padding: 0;
}

a {
  color: inherit;
  text-decoration: none;
}

button {
  margin: 0;
  padding: 0;
  border: 0;
  background: none;
  font: inherit;
  color: inherit;
}

svg {
  display: block;
  flex: none;
}

.sprite {
  position: absolute;
  width: 0;
  height: 0;
}

.ic {
  width: 16px;
  height: 16px;
}

.x {
  width: 10px;
  height: 10px;
}

.pin {
  width: 10px;
  height: 12px;
}

.arrow {
  width: 12px;
  height: 12px;
}

.grip {
  width: 2px;
  height: 14px;
  background: repeating-linear-gradient(#b4b4b0 0 2px, transparent 2px 4px);
}

/* Title bar, tool bars, menu */
.window-head {
  position: relative;
  font-family: "Noto Sans", sans-serif;
}

.title-bar {
  height: 24px;
  padding: 0 2px;
  display: flex;
  align-items: center;
  gap: 5px;
  background-color: #fff;
  border-bottom: 1px solid #f2f1ed;
  color: #8c8c8c;
}

.window-buttons {
  margin-left: auto;
  display: flex;
}

.window-buttons button {
  width: 46px;
  height: 22px;
  display: flex;
  align-items: center;
  justify-content: center;
}

.window-buttons svg {
  width: 12px;
  height: 12px;
  fill: none;
  stroke: #888;
}

.toolbar {
  height: 27px;
  padding-left: 4px;
  display: flex;
  align-items: center;
}

.toolbar.second {
  padding-bottom: 3px;
}

.toolbar .grip {
  margin-right: 5px;
}

.tool {
  width: 24px;
  height: 24px;
  display: flex;
  align-items: center;
  justify-content: center;
}

.tool.on {
  background-color: #e0efd0;
  border: 1px solid #5cb325;
}

.sep {
  width: 1px;
  height: 17px;
  margin: 0 3px 0 2px;
  background-color: #b8b8b4;
}

.tool.feedback {
  width: auto;
  padding: 0 10px 0 4px;
  gap: 7px;
}

.tool.wand {
  width: 31px;
  gap: 3px;
}

.tri {
  border: 3px solid transparent;
  border-top: 4px solid #777;
  border-bottom: 0;
}

.overflow {
  width: 12px;
  height: 26px;
  border-radius: 0 3px 3px 0;
  background: linear-gradient(#f0f0ec, #a8a894);
  display: flex;
  flex-direction: column;
  justify-content: flex-end;
  align-items: center;
  padding-bottom: 3px;
}

.overflow::before {
  content: "";
  width: 6px;
  height: 1px;
  margin-bottom: 2px;
  background-color: #000;
}

.overflow::after {
  content: "";
  border: 3px solid transparent;
  border-top: 3px solid #000;
  border-bottom: 0;
}

.menu {
  height: 22px;
  padding-left: 5px;
  display: flex;
  align-items: center;
  gap: 12px;
}

.remote-handle {
  position: absolute;
  top: 0;
  left: 50%;
  width: 64px;
  height: 32px;
  margin-left: -32px;
  display: flex;
  justify-content: center;
  align-items: center;
  gap: 5px;
  background-color: #2b2b2b;
  border: 1px solid #777;
  border-top: 0;
  border-radius: 0 0 6px 6px;
}

.remote-handle i {
  width: 2px;
  height: 17px;
  background-color: #8a8a8a;
}

/* Work area */
.workspace {
  flex: 1;
  display: grid;
  grid-template-columns: 256px 7px minmax(0, 1fr) 7px 250px;
  background-color: #e3e3e1;
  border-bottom: 1px solid #fff;
}

.splitter {
  display: flex;
  align-items: center;
  justify-content: center;
}

.dots {
  width: 2px;
  height: 34px;
  background: repeating-linear-gradient(#8c8c8c 0 2px, transparent 2px 4px);
}

.pane-head {
  height: 23px;
  padding: 0 6px 0 3px;
  display: flex;
  align-items: center;
  background-color: #f2f1ed;
}

.pane-head h2 {
  flex: 1;
  margin-left: 7px;
  font-size: 11px;
  font-weight: normal;
}

.pane-head button {
  margin-left: 9px;
}

.bar {
  height: 20px;
  padding-left: 6px;
  display: flex;
  align-items: center;
  gap: 10px;
  background-color: #cecece;
  font-family: "DejaVu Sans Condensed", "Noto Sans", sans-serif;
  font-size: 11px;
  font-weight: bold;
  white-space: nowrap;
  color: #000;
}

.chev {
  width: 13px;
  height: 13px;
}

/* Left pane */
.overview {
  display: flex;
  flex-direction: column;
  background-color: #fcfcfa;
}

.overview-body {
  padding: 2px 1px 0;
}

.tree {
  padding: 4px 0 0;
  list-style: none;
}

.tree.short {
  padding-bottom: 19px;
}

.tree li {
  height: 16px;
  padding-left: 4px;
  display: flex;
  align-items: center;
  gap: 2px;
}

.tree .l1 {
  padding-left: 21px;
}

.tree .l2 {
  padding-left: 38px;
}

.tree .open {
  padding-left: 8px;
}

.twist {
  width: 8px;
  height: 8px;
  margin-right: 3px;
  fill: #d0d0d0;
  stroke: #8a8a8a;
}

.tree a {
  padding: 1px 3px 2px;
  white-space: nowrap;
}

.tree .selected {
  background-color: #c1e68d;
}

.hscroll {
  height: 16px;
  margin: 0 0 3px 3px;
  padding: 0 3px;
  display: flex;
  align-items: center;
  background-color: #f0f0f0;
}

.hscroll svg {
  width: 12px;
  height: 12px;
  fill: none;
  stroke: #505050;
  stroke-width: 2;
}

.hscroll .thumb {
  width: 176px;
  height: 16px;
  margin: 0 auto 0 15px;
  background-color: #cdcdcd;
}

/* Centre */
.center {
  display: flex;
  flex-direction: column;
}

.document {
  flex: 1;
  background-color: #e0e0e0;
}

.doc-tabs {
  height: 26px;
  padding: 3px 0 0 2px;
  display: flex;
  background-color: #666c69;
  border-bottom: 1px solid #5cb325;
  box-shadow: inset 0 -3px #c1e68d;
}

.doc-tab {
  width: 91px;
  height: 19px;
  padding: 0 5px 0 4px;
  display: flex;
  align-items: center;
  justify-content: space-between;
  background-color: #e4e3e1;
  border-right: 1px solid #666c69;
}

.doc-tab.active {
  width: 288px;
  background-color: #c1e68d;
  font-family: "DejaVu Sans Condensed", "Noto Sans", sans-serif;
  font-weight: bold;
  border-right: 0;
}

.tab-menu {
  margin: 7px 3px 0 auto;
  height: 5px;
  border: 5px solid transparent;
  border-top-color: #fff;
  border-bottom: 0;
}

.relation {
  height: 84px;
  padding: 0 0 4px 15px;
  display: flex;
  align-items: center;
}

.big-icon {
  width: 30px;
  height: 30px;
}

.relation .big-icon {
  margin-bottom: 8px;
}

.field {
  height: 20px;
  padding: 0 2px;
  border: 1px solid #7a7a7a;
  background-color: #f0f0f0;
  font: inherit;
  color: inherit;
}

.field.name {
  width: 193px;
  margin: 0 7px 0 5px;
}

.rel-arrow {
  position: relative;
  width: 300px;
  height: 40px;
  padding-left: 10px;
  display: flex;
  align-items: center;
}

.rel-arrow svg {
  position: absolute;
  left: 0;
  top: 0;
  width: 300px;
  height: 40px;
}

.rel-arrow span {
  position: relative;
}

.rel-arrow .verb {
  width: 49px;
}

.combo {
  width: 185px;
  height: 21px;
  margin-left: 5px;
  padding-right: 1px;
  display: flex;
  align-items: center;
  background-color: #fff;
  border: 1px solid #8a8a8a;
}

select {
  appearance: none;
  flex: 1;
  min-width: 0;
  height: 18px;
  padding: 0 3px;
  border: 0;
  background-color: transparent;
  font: inherit;
  color: inherit;
}

.combo-btn {
  width: 19px;
  height: 17px;
  padding: 2px;
  background-color: #e1e1e1;
  border: 1px solid #adadad;
  color: #444;
}

.square {
  width: 22px;
  height: 21px;
  margin-left: 5px;
  display: flex;
  align-items: center;
  justify-content: center;
  border: 1px solid #adadad;
  background-color: #e4e4e4;
}

.address {
  height: 290px;
  padding: 6px 0 0 13px;
  display: flex;
  gap: 6px;
  background-color: #c0c0c0;
}

.address-body,
.remark-body {
  flex: 1;
}

.address-head {
  height: 28px;
  display: flex;
  align-items: center;
}

.address-head h2,
.remark h2 {
  width: 358px;
  font-family: "DejaVu Sans Condensed", "Noto Sans", sans-serif;
  font-size: 12px;
  font-weight: bold;
  color: #000;
}

.address-head a {
  display: flex;
  align-items: center;
  gap: 4px;
}

.type-row {
  height: 33px;
  padding: 7px 0 0 2px;
  display: flex;
}

.type-row label {
  width: 104px;
  padding-top: 4px;
}

.type-select {
  height: 20px;
  width: 224px;
  display: flex;
  background-color: #fff;
}

.type-select select {
  height: 20px;
  background-color: #f0f0f0;
  border: 1px solid #7a7a7a;
}

.type-btn {
  width: 17px;
  height: 20px;
  padding: 3px;
  color: #999;
}

.address-card {
  width: 331px;
  height: 204px;
  margin-top: 6px;
  padding: 23px 0 0 35px;
  border: 1px solid #000;
  background:
    linear-gradient(#fff, #d4d4d4) 0 0 / 31px 100% no-repeat,
    linear-gradient(#c7e39b, #fff 90%);
  line-height: 18px;
}

.address-card strong {
  display: block;
  font-family: "Liberation Sans", Arial, sans-serif;
  font-size: 12px;
}

.address-card p {
  margin-top: 8px;
}

.address-card .key {
  display: inline-block;
  width: 50px;
}

.remark {
  padding: 13px 0 0 12px;
  display: flex;
  gap: 7px;
}

.chain-icon {
  width: 30px;
  height: 14px;
  margin-top: 2px;
}

.remark h2 {
  line-height: 18px;
}

.remark label {
  display: block;
  margin: 10px 0 6px 1px;
}

.remark textarea {
  display: block;
  width: 274px;
  height: 120px;
  border: 1px solid #7a7a7a;
  background-color: #fff;
  resize: none;
}

.hsplitter {
  height: 6px;
  display: flex;
  align-items: center;
  justify-content: center;
}

.hdots {
  width: 34px;
  height: 2px;
  background: repeating-linear-gradient(90deg, #8c8c8c 0 2px, transparent 2px 4px);
}

/* Tabs of docked panes */
.tabs {
  height: 20px;
  display: flex;
  background-color: #c9c8c6;
  border-bottom: 1px solid #b2b2ac;
}

.tab {
  height: 20px;
  padding: 0 5px;
  border: 1px solid #b2b2ac;
  border-left: 0;
  background-color: #e3e3e1;
}

.tab.active {
  border-bottom-color: #f2f1ed;
  border-radius: 3px 3px 0 0;
  background-color: #f2f1ed;
}

.hints {
  height: 230px;
  display: flex;
  flex-direction: column;
  background-color: #f3f2ef;
}

.pane-head.green {
  background-color: #e1eecf;
}

.hints .pane-head,
.relations .pane-head {
  height: 25px;
  border-bottom: 2px solid #fcfcfa;
}

.hint-box {
  flex: 1;
  margin: 16px 9px 10px;
  padding-left: 19px;
  border: 1px solid #878787;
  background-color: #fcfcfa;
  font-family: "Liberation Sans", Arial, sans-serif;
}

table {
  width: 100%;
  border-collapse: collapse;
  table-layout: fixed;
}

th {
  height: 20px;
  padding: 0 2px;
  border: 1px solid #878787;
  border-top: 0;
  background: linear-gradient(#f6f6f4, #dcdcda);
  font-weight: normal;
  text-align: left;
}

.c-icon {
  width: 89px;
}

.c-a,
.c-b {
  width: 25px;
}

td {
  height: 18px;
  padding: 0 2px;
}

td .arrow {
  display: inline-block;
  margin: 0 2px 0 2px;
  vertical-align: -2px;
}

tbody tr:nth-child(even) {
  background-color: #f3f2ef;
}

.info {
  width: 14px;
  height: 14px;
  margin: auto;
}

/* Right pane */
.relations {
  background-color: #f0f0f0;
}

.relations-body {
  padding: 0 10px;
}

.actions {
  height: 40px;
  padding-bottom: 6px;
  display: flex;
  align-items: center;
  justify-content: space-between;
}

.actions a {
  display: flex;
  align-items: center;
  gap: 3px;
}

.actions a:last-child {
  padding-right: 14px;
}

.group {
  margin-bottom: 5px;
  padding-bottom: 5px;
  border: 1px solid #cecece;
  border-top: 0;
  background-color: #fcfcfa;
}

.group .bar {
  height: 21px;
}

.card {
  margin: 3px 3px 0;
  padding: 0 3px 3px;
  background-color: #c5d5e0;
}

.card.green {
  background-color: #e7f0d9;
}

.card.current {
  background-color: #88abc9;
}

.card h4 {
  height: 26px;
  padding: 0 1px 1px 4px;
  display: flex;
  align-items: center;
  gap: 3px;
  font-family: "DejaVu Sans Condensed", "Noto Sans", sans-serif;
  font-size: 11px;
  font-weight: bold;
  color: #000;
}

.card h4 span {
  flex: 1;
  white-space: nowrap;
}

.card p {
  padding: 5px;
  background-color: #fcfcfa;
  white-space: nowrap;
}

.card .mail {
  display: block;
  margin-top: 6px;
  padding-top: 6px;
  border-top: 1px solid #ccc;
}

.status-bar {
  height: 21px;
  padding: 4px 17px 0;
  text-align: right;
  font-family: "Open Sans", sans-serif;
  font-size: 12px;
}

/* Windows task bar */
.taskbar {
  height: 40px;
  display: flex;
  background-color: #010307;
  color: #fff;
  font-family: "Open Sans", sans-serif;
}

.task {
  width: 48px;
  height: 40px;
  display: flex;
  align-items: center;
  justify-content: center;
}

.task svg {
  width: 28px;
  height: 28px;
}

.task.app {
  margin-right: 1px;
}

.task.app:nth-child(4) {
  margin-left: 3px;
}

.running {
  background: linear-gradient(#76b9ed, #76b9ed) center bottom / 40px 2px no-repeat;
}

.group-task {
  background:
    linear-gradient(90deg, #76b9ed 32px, #4a7fa8 32px) center bottom / 40px 2px no-repeat;
}

.alert {
  background-color: #9a5420;
  box-shadow: inset 0 -2px #ff7a10;
}

.focused {
  background-color: #333638;
  box-shadow: inset 0 -2px #76b9ed;
}

.tray {
  margin-left: auto;
  padding-right: 4px;
  display: flex;
  align-items: center;
  gap: 8px;
}

.tray-icon {
  width: 16px;
  height: 16px;
  fill: none;
  stroke: #fff;
}

.clock {
  width: 58px;
  text-align: center;
  line-height: 18px;
}

.notify {
  position: relative;
  width: 45px;
  height: 40px;
  border-right: 1px solid #555;
}

.notify svg {
  width: 18px;
  height: 18px;
  margin: 0 0 0 7px;
}

.badge {
  position: absolute;
  left: 15px;
  top: 19px;
  width: 17px;
  height: 17px;
  border: 1px solid #888;
  border-radius: 50%;
  background-color: #2a2c30;
  line-height: 15px;
  font-weight: bold;
}

/* Message box */
.overlay {
  position: fixed;
  inset: 0;
  padding-bottom: 48px;
  display: flex;
  align-items: center;
  justify-content: center;
  font-family: "Noto Sans", sans-serif;
}

.dialog {
  width: 700px;
  background-color: #f2f1ed;
  border: 1px solid #5a5f5c;
}

.dialog-title {
  height: 30px;
  padding: 0 9px 0 8px;
  display: flex;
  align-items: center;
  justify-content: space-between;
  background-color: #fff;
}

.dialog-title h2 {
  font-size: 11px;
  font-weight: normal;
}

.dialog-title svg,
.dialog-title button {
  width: 12px;
  height: 12px;
  fill: none;
  stroke: #111;
}

.dialog-body {
  padding: 12px 13px 0;
  display: flex;
  gap: 31px;
}

.dialog-icon {
  width: 30px;
  height: 30px;
  margin-top: 1px;
}

.dialog-text {
  line-height: 16px;
  white-space: nowrap;
}

.dialog-text .code {
  margin-bottom: 19px;
}

.dialog-buttons {
  margin-top: 63px;
  padding: 0 14px 25px;
  display: flex;
  justify-content: flex-end;
  gap: 9px;
}

.dialog-buttons button {
  width: 89px;
  height: 27px;
  border: 1px solid #adadad;
  background-color: #e1e1e1;
}

.dialog-buttons .default {
  border-color: #0078d7;
  background-color: #e5f1fb;
}
```
